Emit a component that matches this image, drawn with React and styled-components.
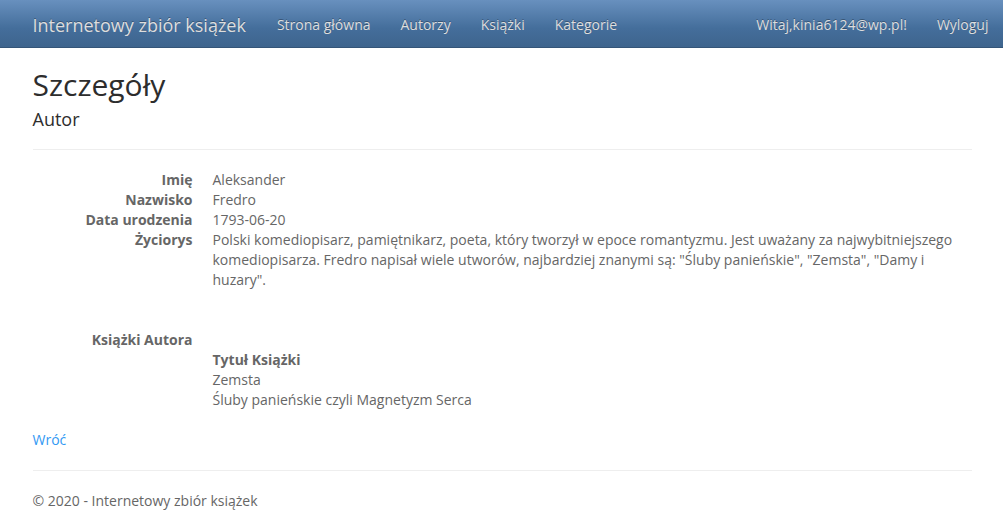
import React from "react";
import styled, { createGlobalStyle } from "styled-components";

const Global = createGlobalStyle`
  * { box-sizing: border-box; }
  body {
    margin: 0;
    font-family: "Open Sans", "Helvetica Neue", Arial, sans-serif;
    font-size: 14px;
    line-height: 20px;
    color: #666666;
    background: #fff;
  }
`;

const Navbar = styled.nav`
  height: 48px;
  background-image: linear-gradient(#6890be, #446e9b 60%, #3e648d);
  border-bottom: 1px solid #345578;
`;
const NavInner = styled.div`
  width: 970px;
  margin: 0 auto;
  padding: 2px 15px 0 16px;
  display: flex;
  align-items: center;
  height: 100%;
`;
const Brand = styled.a`
  font-size: 18px;
  color: #dddddd;
  text-shadow: 0 -1px 0 rgba(0, 0, 0, 0.3);
  margin-right: 16px;
  white-space: nowrap;
`;
const NavList = styled.div`
  display: flex;
  margin-left: ${(p) => (p.right ? "auto" : "0")};
  margin-right: ${(p) => (p.right ? "-32px" : "0")};
`;
const NavLink = styled.a`
  padding: 0 15px;
  color: #dddddd;
  text-shadow: 0 -1px 0 rgba(0, 0, 0, 0.3);
  white-space: nowrap;
`;

const Container = styled.div`
  width: 970px;
  margin: 0 auto;
  padding: 0 15px 0 16px;
`;
const Title = styled.h2`
  margin: 20px 0 8px;
  font-size: 30px;
  line-height: 33px;
  font-weight: 400;
  color: #2d2d2d;
`;
const Subtitle = styled.h4`
  margin: 0;
  font-size: 18px;
  line-height: 20px;
  font-weight: 400;
  color: #2d2d2d;
`;
const Rule = styled.hr`
  margin: ${(p) => p.m || "20px 0"};
  border: 0;
  border-top: 1px solid #eeeeee;
`;
const DList = styled.dl`
  display: grid;
  grid-template-columns: 160px 1fr;
  column-gap: 20px;
  margin: 0 0 ${(p) => p.mb || "20px"};
`;
const Term = styled.dt`
  text-align: right;
  font-weight: 700;
  white-space: nowrap;
`;
const Desc = styled.dd`
  margin: 0;
  font-weight: ${(p) => (p.bold ? 700 : 400)};
`;
const Spacer = styled.div`
  height: ${(p) => p.h}px;
`;
const Link = styled.a`
  color: #3399f3;
  text-decoration: none;
`;
const Footer = styled.footer`
  padding-bottom: 10px;
`;

const details = [
  ["Imię", "Aleksander"],
  ["Nazwisko", "Fredro"],
  ["Data urodzenia", "1793-06-20"],
  [
    "Życiorys",
    'Polski komediopisarz, pamiętnikarz, poeta, który tworzył w epoce romantyzmu. Jest uważany za najwybitniejszego komediopisarza. Fredro napisał wiele utworów, najbardziej znanymi są: "Śluby panieńskie", "Zemsta", "Damy i huzary".',
  ],
];

const books = ["Zemsta", "Śluby panieńskie czyli Magnetyzm Serca"];

export default function App() {
  return (
    <>
      <Global />
      <Navbar>
        <NavInner>
          <Brand>Internetowy zbiór książek</Brand>
          <NavList>
            <NavLink>Strona główna</NavLink>
            <NavLink>Autorzy</NavLink>
            <NavLink>Książki</NavLink>
            <NavLink>Kategorie</NavLink>
          </NavList>
          <NavList right>
            <NavLink>Witaj,kinia6124@wp.pl!</NavLink>
            <NavLink>Wyloguj</NavLink>
          </NavList>
        </NavInner>
      </Navbar>
      <Container>
        <Title>Szczegóły</Title>
        <Subtitle>Autor</Subtitle>
        <Rule m="20px 0" />
        <DList mb="0">
          {details.map(([k, v]) => (
            <React.Fragment key={k}>
              <Term>{k}</Term>
              <Desc>{v}</Desc>
            </React.Fragment>
          ))}
        </DList>
        <Spacer h={40} />
        <DList>
          <Term>Książki Autora</Term>
          <Desc />
          <Term />
          <Desc bold>Tytuł Książki</Desc>
          {books.map((b) => (
            <React.Fragment key={b}>
              <Term />
              <Desc>{b}</Desc>
            </React.Fragment>
          ))}
        </DList>
        <Link href="#">Wróć</Link>
        <Rule m="20px 0 20px" />
        <Footer>© 2020 - Internetowy zbiór książek</Footer>
      </Container>
    </>
  );
}
